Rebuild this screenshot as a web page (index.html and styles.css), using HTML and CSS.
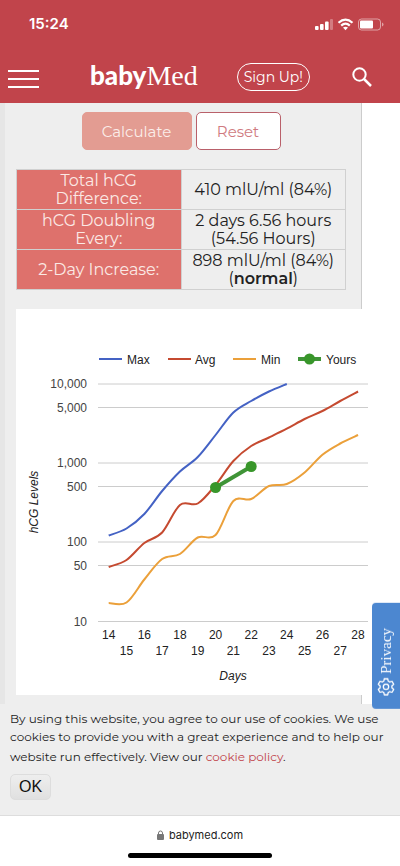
FILE: index.html
```html
<!DOCTYPE html>
<html lang="en">
<head>
    <meta charset="UTF-8">
    <meta name="viewport" content="width=device-width, initial-scale=1.0">
    <title>hCG Calculator - babyMed</title>
    <link rel="stylesheet" href="styles.css">
</head>
<body>

<header class="header">
    <div class="status">
        <span class="time">15:24</span>
        <svg width="70" height="14" viewBox="0 0 70 14" aria-hidden="true">
            <g fill="#fff">
                <rect x="1" y="9" width="3.600" height="4" rx="1"/>
                <rect x="6" y="7" width="3.600" height="6" rx="1"/>
                <rect x="11" y="4.500" width="3.600" height="8.500" rx="1"/>
                <rect x="16" y="2" width="3" height="11" rx="1" opacity="0.3"/>
                <path d="M31.500 13.200L29 10.600Q31.500 8.700 34 10.600Z"/>
                <rect x="46" y="3.500" width="13" height="8" rx="1"/>
                <path d="M68 5.500v4q1.500-.500 1.500-2t-1.500-2z" opacity="0.5"/>
            </g>
            <g fill="none" stroke="#fff" stroke-width="2.200">
                <path d="M24.500 5.700Q31.500 -.500 38.500 5.700"/>
                <path d="M27.200 8.600Q31.500 4.600 35.800 8.600"/>
            </g>
            <rect x="44.500" y="2" width="22" height="11" rx="3" fill="none" stroke="#fff" opacity="0.5"/>
        </svg>
    </div>
    <div class="navbar">
        <button class="icon-btn menu" type="button" aria-label="Menu">
            <svg width="32" height="20" viewBox="0 0 32 20" stroke="#fff" stroke-width="2"><path d="M0 2h31M0 10h31M0 18h31"/></svg>
        </button>
        <a class="logo" href="#"><b>baby</b>Med</a>
        <a class="signup" href="#">Sign Up!</a>
        <button class="icon-btn search" type="button" aria-label="Search">
            <svg width="20" height="20" viewBox="0 0 20 20" fill="none" stroke="#fff"><circle cx="7.500" cy="7.500" r="6.200" stroke-width="2"/><path d="M12 12l7 7" stroke-width="2.500"/></svg>
        </button>
    </div>
</header>

<main class="content">
    <div class="actions">
        <button class="btn calculate" type="button">Calculate</button>
        <button class="btn reset" type="button">Reset</button>
    </div>

    <table class="results">
        <tr>
            <th scope="row">Total hCG Difference:</th>
            <td>410 mlU/ml (84%)</td>
        </tr>
        <tr>
            <th scope="row">hCG Doubling Every:</th>
            <td>2 days 6.56 hours (54.56 Hours)</td>
        </tr>
        <tr>
            <th scope="row">2-Day Increase:</th>
            <td>898 mlU/ml (84%) (<b>normal</b>)</td>
        </tr>
    </table>

    <div class="chart">
        <svg id="chart" viewBox="0 0 371 386" role="img" aria-label="hCG levels by day">
            <g class="legend">
                <path class="line max" d="M83 50h23"/><text x="111" y="55">Max</text>
                <path class="line avg" d="M152 50h23"/><text x="179" y="55">Avg</text>
                <path class="line min" d="M217 50h23"/><text x="245" y="55">Min</text>
                <path class="line yours" d="M282 50h23"/><circle class="dot" cx="293.500" cy="50" r="5.500"/><text x="310" y="55">Yours</text>
            </g>
            <g id="grid"></g>
            <g id="days"></g>
            <g id="series"></g>
            <text class="title" x="217" y="371" text-anchor="middle">Days</text>
            <text class="title" transform="translate(22 193) rotate(-90)" text-anchor="middle">hCG Levels</text>
        </svg>
    </div>
</main>

<section class="cookies">
    <p>By using this website, you agree to our use of cookies. We use cookies to provide you with a great experience and to help our</p>
    <p class="more">website run effectively. View our <a href="#">cookie policy</a>.</p>
    <button class="ok" type="button">OK</button>
</section>

<footer class="browser">
    <div class="address">
        <svg width="7" height="10" viewBox="0 0 7 10" aria-hidden="true"><rect y="4" width="7" height="6" rx="1" fill="#777"/><path d="M1.500 4.500V3a2 2 0 0 1 4 0v1.500" fill="none" stroke="#777"/></svg>
        <span>babymed.com</span>
    </div>
    <div class="home"></div>
</footer>

<button class="privacy" type="button">
    <svg width="18" height="18" viewBox="0 0 18 18" fill="none" stroke="#fff" stroke-width="1.300" stroke-linejoin="round" aria-hidden="true">
        <path d="M7.300 1h3.400l.500 2.300 1.500.900 2.300-.700 1.700 2.900-1.800 1.600v2l1.800 1.600-1.700 2.900-2.300-.700-1.500.900-.500 2.300H7.300l-.500-2.300-1.500-.900-2.300.700-1.700-2.900L3.100 10V8L1.300 6.400 3 3.500l2.300.700 1.500-.900z"/>
        <circle cx="9" cy="9" r="2.700"/>
    </svg>
    <span>Privacy</span>
</button>

<script>
const ticks = [['10,000', 75], ['5,000', 98.5], ['1,000', 154], ['500', 177.5], ['100', 233], ['50', 256.5], ['10', 312.5]];

// y position of every line, one value per day from day 14
const series = {
    max: [226.5, 219.5, 205, 182, 162.5, 148, 126, 103.5, 92, 82.5, 75],
    avg: [258, 251, 234, 223.5, 196, 194.5, 176, 152, 137, 128.5, 119.7, 110, 102, 92, 82.5],
    min: [294, 293.5, 270.5, 250, 245, 228.5, 226, 192, 190, 177, 175, 163.5, 145.7, 134.5, 126]
};

function dayX(day) {
    return 92.7 + (day - 14) * 17.81;
}

function smooth(ys) {
    const p = ys.map((y, i) => [dayX(14 + i), y]);
    let d = `M${p[0]}`;
    for (let i = 0; i < p.length - 1; i++) {
        const a = p[i - 1] || p[i];
        const b = p[i];
        const c = p[i + 1];
        const e = p[i + 2] || c;
        d += `C${b[0] + (c[0] - a[0]) / 6},${b[1] + (c[1] - a[1]) / 6} ${c[0] - (e[0] - b[0]) / 6},${c[1] - (e[1] - b[1]) / 6} ${c}`;
    }
    return d;
}

document.getElementById('grid').innerHTML = ticks.map(([label, y]) =>
    `<path class="gridline" d="M82 ${y}h270"/><text class="tick" x="71" y="${y + 4}" text-anchor="end">${label}</text>`
).join('');

let days = '';
for (let day = 14; day <= 28; day++) {
    days += `<text x="${dayX(day)}" y="${day % 2 ? 346 : 330}" text-anchor="middle">${day}</text>`;
}
document.getElementById('days').innerHTML = days;

document.getElementById('series').innerHTML = Object.keys(series).map(name =>
    `<path class="line ${name}" d="${smooth(series[name])}"/>`
).join('') + `<path class="line yours" d="M${dayX(20)} 178.5L${dayX(22)} 157.5"/>
    <circle class="dot" cx="${dayX(20)}" cy="178.5" r="5.500"/>
    <circle class="dot" cx="${dayX(22)}" cy="157.5" r="5.500"/>`;
</script>

</body>
</html>
```

FILE: styles.css
```css
* {
    box-sizing: border-box;
}

body {
    margin: 0;
    min-height: 100vh;
    display: flex;
    flex-direction: column;
    background: #fff;
    color: #222;
    font-family: Montserrat, Inter, sans-serif;
    font-size: 16px;
    line-height: 18px;
}

button {
    font-family: inherit;
    cursor: pointer;
}

.header {
    background: #c1444b;
    color: #fff;
    padding: 15px 0 6px;
}

.status {
    display: flex;
    justify-content: space-between;
    align-items: center;
    padding: 0 16px 0 29px;
}

.time {
    font-family: Inter, sans-serif;
    font-size: 15px;
    font-weight: 600;
}

.navbar {
    display: flex;
    align-items: center;
    height: 40px;
    margin-top: 24px;
    padding: 0 28px 0 8px;
}

.icon-btn {
    display: flex;
    padding: 0;
    border: 0;
    background: none;
}

.menu {
    padding-top: 4px;
}

.logo {
    margin-left: 50px;
    padding-bottom: 4px;
    color: #fff;
    font-family: "Liberation Serif", serif;
    font-size: 28px;
    line-height: 28px;
    text-decoration: none;
}

.logo b {
    font-family: Lato, sans-serif;
    font-size: 26px;
    font-weight: 900;
}

.signup {
    margin-left: auto;
    padding: 3px 6px;
    border: 1px solid #fff;
    border-radius: 14px;
    color: #fff;
    font-size: 14px;
    line-height: 20px;
    text-decoration: none;
}

.search {
    margin-left: 42px;
}

.content {
    margin-right: 38px;
    padding: 9px 15px 9px 11px;
    background: #eee;
    border-left: 5px solid #e6e6e6;
    border-right: 1px solid #ccc;
}

.actions {
    display: flex;
    justify-content: center;
    gap: 4px;
}

.btn {
    height: 38px;
    border: 1px solid #e39c92;
    border-radius: 5px;
    font-size: 15px;
}

.calculate {
    width: 110px;
    background: #e39c92;
    color: #fbeeea;
}

.reset {
    width: 85px;
    border-color: #b9606a;
    background: #fff;
    color: #cf7a80;
}

.results {
    width: 100%;
    margin: 19px 0;
    table-layout: fixed;
    border-collapse: collapse;
}

.results th,
.results td {
    height: 40px;
    padding: 1px 8px;
    border: 1px solid #d0d0d0;
    font-weight: 400;
    text-align: center;
}

.results th {
    background: #de716c;
    color: #fbe9e5;
}

.results b {
    font-weight: 600;
}

.chart {
    margin-right: -41px;
    background: #fff;
}

.chart svg {
    display: block;
    width: 100%;
}

.chart text {
    font-family: "Liberation Sans", Arial, sans-serif;
    font-size: 12px;
    fill: #222;
}

.chart .tick {
    fill: #444;
}

.chart .title {
    font-style: italic;
}

.gridline {
    stroke: #ccc;
}

.line {
    fill: none;
    stroke-width: 2;
}

.max {
    stroke: #4462c4;
}

.avg {
    stroke: #c54a30;
}

.min {
    stroke: #eba03a;
}

.yours {
    stroke: #3f9437;
    stroke-width: 4;
}

.dot {
    fill: #38962a;
}

.cookies {
    padding: 6px 10px 15px;
    background: #eee;
    border-bottom: 1px solid #ddd;
    font-size: 12px;
}

.cookies p {
    margin: 0;
}

.cookies .more {
    margin-top: 2px;
}

.cookies a {
    color: #c1444b;
    text-decoration: none;
}

.ok {
    display: block;
    margin-top: 8px;
    padding: 3px 8px;
    border: 1px solid #ddd;
    border-radius: 5px;
    background: linear-gradient(#eee, #e0e0e0);
    color: #111;
    font-family: "Liberation Sans", Arial, sans-serif;
    font-size: 16px;
    line-height: 18px;
}

.browser {
    display: flex;
    flex-direction: column;
    align-items: center;
    gap: 9px;
    padding: 10px 0 8px;
}

.address {
    display: flex;
    align-items: center;
    gap: 5px;
    font-family: Inter, sans-serif;
    font-size: 11px;
}

.home {
    width: 36%;
    height: 5px;
    border-radius: 3px;
    background: #000;
}

/* Privacy tab stays over the page on the right edge */
.privacy {
    position: fixed;
    right: 0;
    bottom: 157px;
    display: flex;
    align-items: center;
    gap: 4px;
    padding: 13px 5px 25px;
    border: 0;
    border-radius: 0 4px 4px 0;
    background: #4c87d0;
    color: #fff;
    font-family: "Liberation Serif", serif;
    font-size: 15px;
    line-height: 18px;
    writing-mode: vertical-rl;
    transform: rotate(180deg);
}
```
